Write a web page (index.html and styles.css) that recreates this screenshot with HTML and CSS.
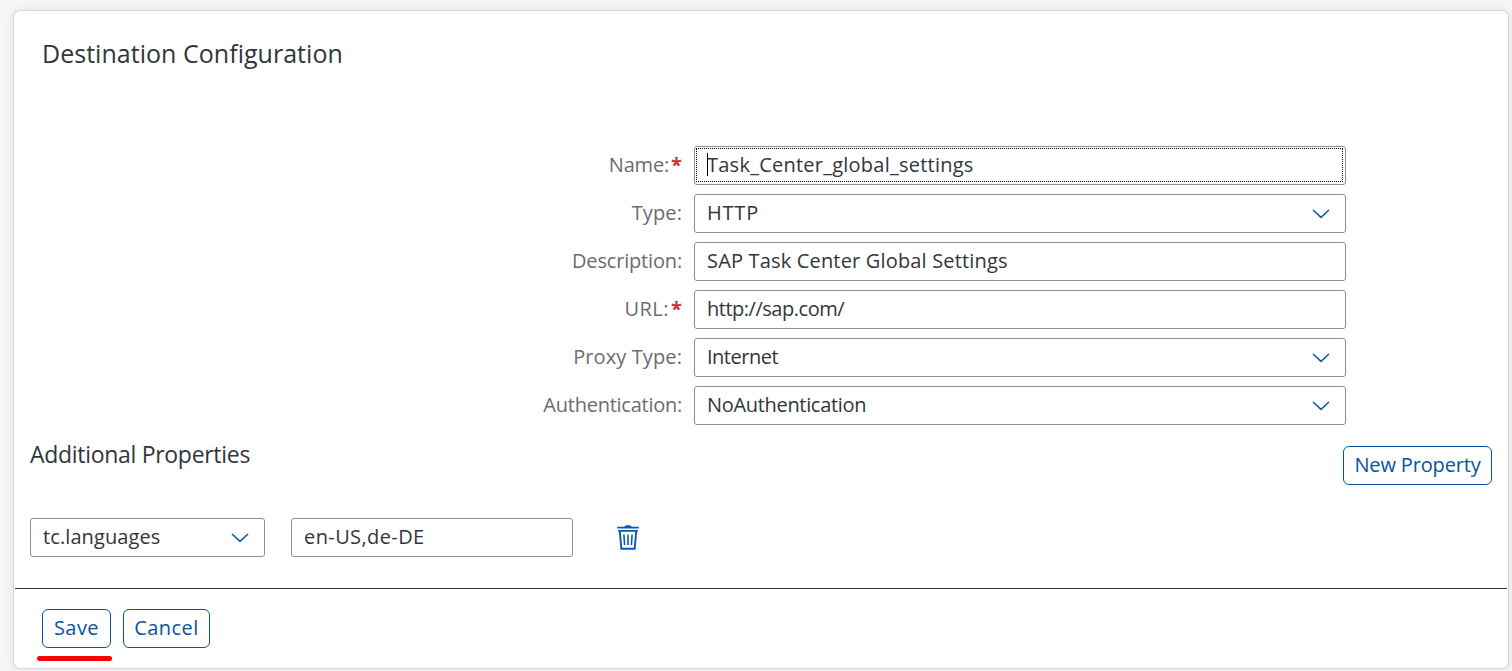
FILE: index.html
```html
<!DOCTYPE html>
<html lang="en">
<head>
<meta charset="utf-8">
<title>Destination Configuration</title>
<link rel="stylesheet" href="styles.css">
</head>
<body>
<main class="card">
  <h1 class="title"><span class="t-title">Destination Configuration</span></h1>
  <section class="form">
    <div class="row"><span class="label t-name">Name:<b class="req">*</b></span><div class="field focused"><span class="caret"></span><span class="v-name">Task_Center_global_settings</span></div></div>
    <div class="row"><span class="label t-type">Type:</span><div class="field"><span class="v-http">HTTP</span><svg class="arrow" viewBox="0 0 18 10"><path d="M1 1 L9 8.4 L17 1"/></svg></div></div>
    <div class="row"><span class="label t-desc">Description:</span><div class="field"><span class="v-desc">SAP Task Center Global Settings</span></div></div>
    <div class="row"><span class="label t-url">URL:<b class="req">*</b></span><div class="field"><span class="v-url">http://sap.com/</span></div></div>
    <div class="row"><span class="label t-proxy">Proxy Type:</span><div class="field"><span class="v-inet">Internet</span><svg class="arrow" viewBox="0 0 18 10"><path d="M1 1 L9 8.4 L17 1"/></svg></div></div>
    <div class="row"><span class="label t-auth">Authentication:</span><div class="field"><span class="v-auth">NoAuthentication</span><svg class="arrow" viewBox="0 0 18 10"><path d="M1 1 L9 8.4 L17 1"/></svg></div></div>
  </section>
  <section class="props-head">
    <h2 class="subtitle"><span class="t-sub">Additional Properties</span></h2>
    <button class="btn btn-new"><span class="b-new">New Property</span></button>
  </section>
  <section class="props">
    <div class="field key"><span class="v-lang">tc.languages</span><svg class="arrow" viewBox="0 0 18 10"><path d="M1 1 L9 8.4 L17 1"/></svg></div>
    <div class="field value"><span class="v-en">en-US,de-DE</span></div>
    <svg class="trash" viewBox="0 0 22 26"><path class="solid" d="M7.3 1.8 Q8.2 .3 9.5 .3 H12.5 Q13.8 .3 14.7 1.8 H21.7 V3.6 H.3 V1.8 Z"/><path d="M1.2 5.9 H20.8 M2.8 6.3 L4.3 23.7 H17.7 L19.2 6.3"/><path class="bars" d="M6.9 9.5 L7.6 20 M11 9.5 V20 M15.1 9.5 L14.4 20"/></svg>
  </section>
  <footer class="footer">
    <div class="save"><button class="btn btn-save"><span class="b-save">Save</span></button><span class="mark"></span></div>
    <button class="btn btn-cancel"><span class="b-cancel">Cancel</span></button>
  </footer>
</main>
</body>
</html>
```
FILE: styles.css
```css
* { box-sizing: border-box; }
body {
  margin: 0; height: 671px; overflow: hidden; padding: 11px 4px 3px 14px;
  background: #f6f6f6; color: #32363a;
  font: 20px/37px "Open Sans", "Noto Sans", sans-serif;
}
.card {
  height: 657px; background: #fff; border-radius: 6px;
  box-shadow: 0 0 0 1px #d5d5d5, 0 0 12px rgba(0,0,0,.1);
  display: flex; flex-direction: column;
}
h1, h2 { margin: 0; font-weight: 400; white-space: nowrap; }
.title { height: 135px; padding: 24px 0 0 28px; font-size: 25px; line-height: 36px; letter-spacing: .03px; }
.form { display: flex; flex-direction: column; gap: 9px; }
.row { display: grid; grid-template-columns: 668px 652px; column-gap: 12px; height: 39px; }
.label { text-align: right; color: #6a6d70; white-space: nowrap; }
.req { display: inline-block; color: #d32f2f; font-size: 20px; line-height: 20px; letter-spacing: 0; margin-left: 2px; width: 11px; }
.field {
  position: relative; height: 39px; border: 1px solid #89919a; border-radius: 3px;
  padding: 0 15px 0 12px; display: flex; justify-content: space-between; align-items: center; white-space: nowrap;
}
.field > span:not(.caret), .btn > span { line-height: 37px; height: 39px; }
.focused::after { content: ""; position: absolute; inset: 1px 2px 2px 1px; border: 1px dotted #000; }
.caret { position: absolute; left: 12px; top: 6px; width: 1px; height: 23px; background: #000; }
.t-name { letter-spacing: -.2px; }
.t-type { letter-spacing: .1px; }
.t-desc { letter-spacing: -.17px; }
.t-url { letter-spacing: .5px; }
.t-proxy { letter-spacing: .1px; }
.t-auth { letter-spacing: -.25px; }
.v-name { letter-spacing: .24px; }
.v-http { letter-spacing: .8px; }
.v-desc { letter-spacing: .17px; }
.v-url { letter-spacing: -.48px; }
.v-inet { letter-spacing: -.5px; }
.v-auth { letter-spacing: -.32px; }
.v-lang { letter-spacing: .1px; }
.v-en { letter-spacing: .4px; }
.t-sub { letter-spacing: -.3px; }
.b-new { letter-spacing: -.15px; }
.b-save, .b-cancel { letter-spacing: .45px; }
.arrow { width: 18px; height: 10px; fill: none; stroke: #0a5cab; stroke-width: 1.6; }
.props-head { height: 60px; margin-top: 21px; padding: 0 16px; display: flex; justify-content: space-between; align-items: flex-start; }
.subtitle { font-size: 23px; line-height: 34px; margin-top: -9px; }
.btn {
  height: 39px; padding: 0; border: 1px solid #0854a0; border-radius: 6px; background: #fff;
  color: #0854a0; font: inherit; display: flex; justify-content: center; align-items: center; white-space: nowrap;
}
.btn-new { width: 149px; }
.btn-save { width: 69px; }
.btn-cancel { width: 87px; }
.props { margin-top: 12px; padding-left: 16px; height: 70px; display: flex; }
.key { width: 235px; }
.value { width: 282px; margin-left: 26px; }
.trash { width: 22px; height: 26px; margin: 7px 0 0 44px; fill: none; stroke: #0a5cab; stroke-width: 1.9; }
.trash .solid { fill: #0a5cab; stroke: none; }
.trash .bars { stroke-width: 1.6; }
.footer { flex: 1; margin: 0 1px; border-top: 1px solid #32363a; padding: 20px 0 0 27px; display: flex; gap: 12px; }
.save { position: relative; height: 39px; }
.mark { position: absolute; left: -5px; top: 47px; width: 75px; height: 5px; border-radius: 3px; background: #f00; }
```
